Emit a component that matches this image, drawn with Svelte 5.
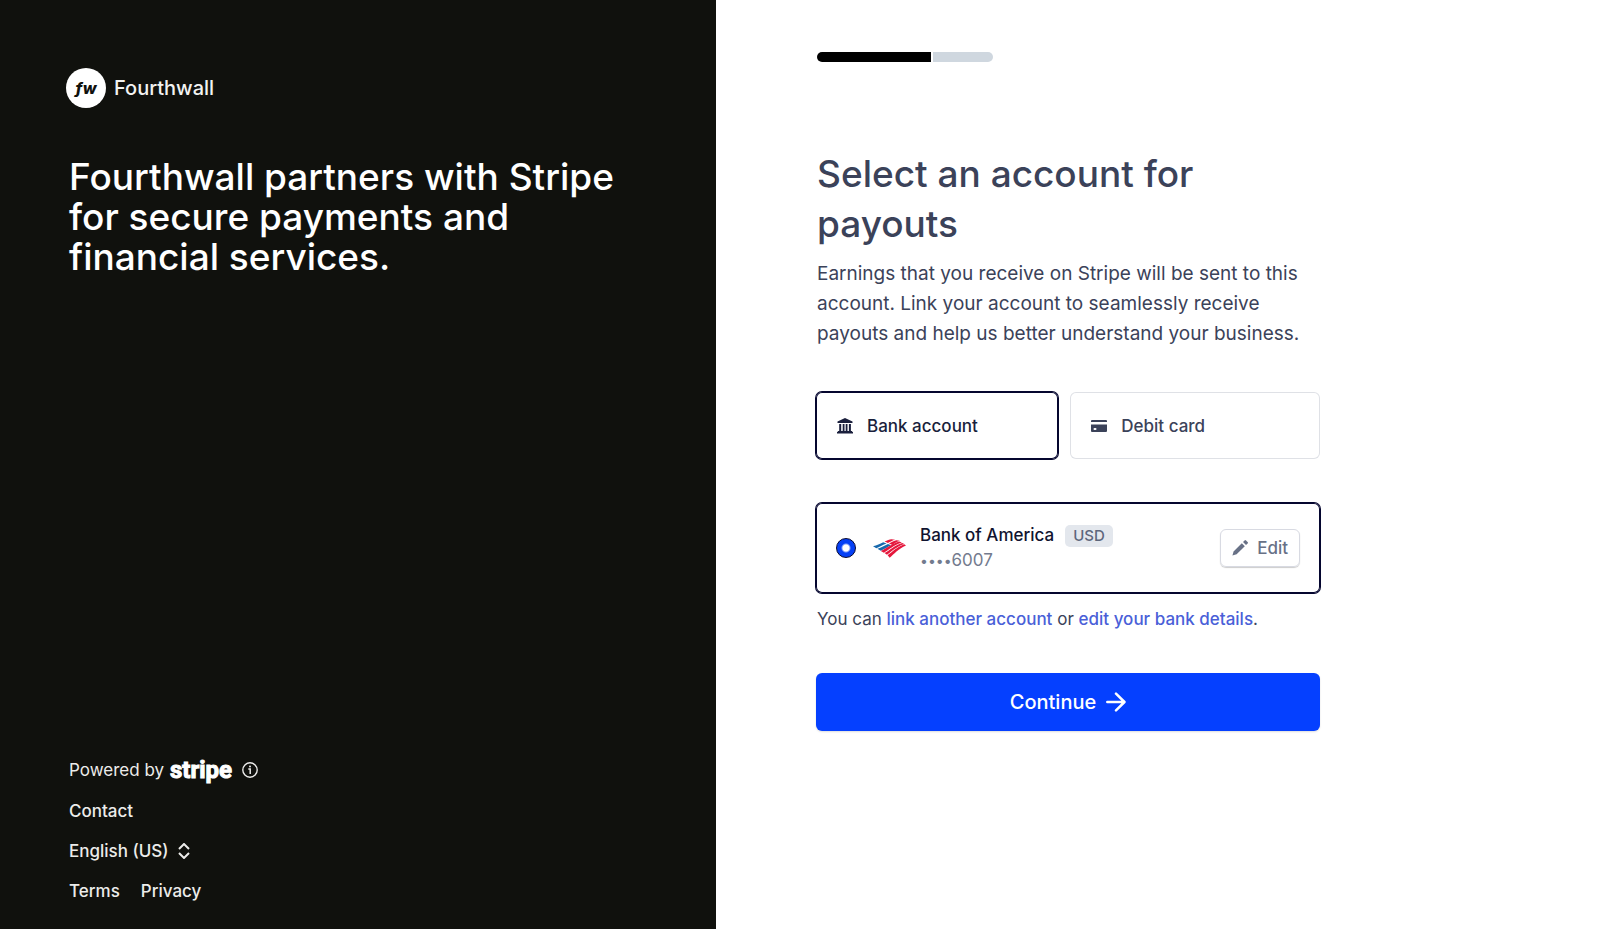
<script>
  let method = "bank";
  let account = "boa";
  const progress = 65;
</script>

<div class="page">
  <aside class="intro">
    <div class="brand">
      <span class="badge">fw</span>
      <span class="brand-name">Fourthwall</span>
    </div>
    <h2>
      Fourthwall partners with Stripe<br />for secure payments and<br />financial services.
    </h2>

    <footer>
      <div class="powered">
        <span>Powered by</span>
        <span class="stripe">stripe</span>
        <button class="info" aria-label="About Stripe">
          <svg width="16" height="16" viewBox="0 0 16 16" fill="none">
            <circle cx="8" cy="8" r="7.200" stroke="currentColor" stroke-width="1.400" />
            <path d="M6.300 7.100h1.900v4.900" stroke="currentColor" stroke-width="1.500" />
            <circle cx="8" cy="4.600" r="1" fill="currentColor" />
          </svg>
        </button>
      </div>
      <a href="#contact">Contact</a>
      <button class="language">
        English (US)
        <svg width="12" height="16" viewBox="0 0 12 16" fill="none" stroke="currentColor" stroke-width="2">
          <path d="M1 6l5-5 5 5M1 10l5 5 5-5" />
        </svg>
      </button>
      <nav>
        <a href="#terms">Terms</a>
        <a href="#privacy">Privacy</a>
      </nav>
    </footer>
  </aside>

  <main>
    <div class="progress">
      <div class="done" style="width: {progress}%"></div>
      <div class="rest"></div>
    </div>

    <h1>Select an account for payouts</h1>
    <p class="lead">
      Earnings that you receive on Stripe will be sent to this account. Link your account to
      seamlessly receive payouts and help us better understand your business.
    </p>

    <div class="methods">
      <button class="method" class:selected={method === "bank"} on:click={() => (method = "bank")}>
        <svg width="16" height="16" viewBox="0 0 16 16" fill="currentColor">
          <path d="M8 0l7.500 3.400V5H.5V3.400zM2.200 6h2v7h-2zM5.700 6h1.800v7H5.700zM8.700 6h1.800v7H8.700zM11.900 6h2v7h-2zM.8 13h14.400v1H16v1.500H0V14h.8z" />
        </svg>
        Bank account
      </button>
      <button class="method" class:selected={method === "card"} on:click={() => (method = "card")}>
        <svg width="16" height="16" viewBox="0 0 16 16" fill="currentColor">
          <path d="M1 2h14a1 1 0 0 1 1 1v1H0V3a1 1 0 0 1 1-1z" />
          <path fill-rule="evenodd" d="M0 6.500h16V13a1 1 0 0 1-1 1H1a1 1 0 0 1-1-1zM3.500 10a1 1 0 0 0 0 2h1a1 1 0 0 0 0-2z" />
        </svg>
        Debit card
      </button>
    </div>

    <div class="account">
      <input type="radio" id="boa" name="account" value="boa" bind:group={account} />
      <label for="boa">
        <svg width="33" height="19" viewBox="0 0 97 55">
          <g fill="#1769ad">
            <path d="M0 21C12 18 20 14 30 9l10 4C29 17 21 22 10 27z" />
            <path d="M13 28C25 24 34 19 44 14l9 4C43 23 35 29 23 34z" />
          </g>
          <g fill="#e5173c">
            <path d="M34 7C42 3 48 0 54 0l11 2C57 4 51 8 44 11z" />
            <path d="M47 13C55 8 62 4 69 3l10 2C71 7 64 12 57 17z" />
            <path d="M23 35C39 28 54 14 77 7l8 3C61 18 47 31 32 40z" />
            <path d="M34 41C50 32 62 19 86 11l6 3C69 22 55 35 41 46z" />
            <path d="M43 47C58 37 68 24 92 15l5 4C75 28 63 43 49 55z" />
          </g>
        </svg>
        <span class="details">
          <span class="bank">Bank of America <span class="currency">USD</span></span>
          <span class="number"><span class="dots">••••</span>6007</span>
        </span>
      </label>
      <button class="edit">
        <svg width="16" height="16" viewBox="0 0 16 16" fill="currentColor">
          <path d="M9.800 3.200l3 3L4.600 14.300.4 15.600 1.600 11.400z" />
          <path d="M11 2L12.600.4a1 1 0 0 1 1.400 0l1.600 1.600a1 1 0 0 1 0 1.400L14 5z" />
        </svg>
        Edit
      </button>
    </div>
    <p class="hint">
      You can <a href="#link">link another account</a> or <a href="#edit">edit your bank details</a>.
    </p>

    <button class="continue">
      Continue
      <svg width="20" height="20" viewBox="0 0 20 20" fill="none" stroke="currentColor" stroke-width="2.500">
        <path d="M1.300 10h17M10 1.700l8.500 8.300-8.500 8.300" stroke-linecap="round" stroke-linejoin="round" />
      </svg>
    </button>
  </main>
</div>

<style>
  :global(body) {
    margin: 0;
  }

  .page {
    display: flex;
    min-height: 100vh;
    font-family: Inter, "Liberation Sans", sans-serif;
    color: #3b4259;
    background: #fff;
  }

  button {
    font: inherit;
    color: inherit;
    background: none;
    border: 0;
    padding: 0;
    cursor: pointer;
  }

  a {
    color: inherit;
    text-decoration: none;
  }

  svg {
    flex: none;
    display: block;
  }

  .intro {
    box-sizing: border-box;
    width: 716px;
    flex: none;
    padding: 68px 66px 26px;
    display: flex;
    flex-direction: column;
    background: #10110d;
    color: #fff;
  }

  .brand {
    display: flex;
    align-items: center;
    gap: 8px;
    color: #f3f3f1;
    font-size: 20px;
    font-weight: 500;
  }

  .badge {
    width: 40px;
    height: 40px;
    border-radius: 50%;
    background: #fff;
    color: #10110d;
    display: flex;
    align-items: center;
    justify-content: center;
    font-size: 16px;
    font-weight: 800;
    font-style: italic;
  }

  h2 {
    margin: 49px 0 0 3px;
    font-size: 37px;
    line-height: 40px;
    font-weight: 500;
  }

  footer {
    margin: auto 0 0 3px;
    display: flex;
    flex-direction: column;
    align-items: flex-start;
    gap: 16px;
    font-size: 17px;
    line-height: 24px;
    font-weight: 500;
    color: #ececea;
  }

  .powered {
    display: flex;
    align-items: center;
    margin-bottom: 1px;
    font-weight: 400;
  }

  .stripe {
    margin: 0 10px 0 6px;
    font-family: Roboto, "Liberation Sans", sans-serif;
    font-size: 24px;
    font-weight: 700;
    color: #fff;
    -webkit-text-stroke: 1px #fff;
  }

  .language {
    display: flex;
    align-items: center;
    gap: 9px;
  }

  nav {
    display: flex;
    gap: 21px;
  }

  main {
    box-sizing: border-box;
    flex: 1;
    max-width: 604px;
    padding: 52px 0 52px 100px;
  }

  .progress {
    display: flex;
    gap: 2px;
    width: 176px;
    height: 10px;
    margin-left: 1px;
    border-radius: 5px;
    overflow: hidden;
  }

  .done {
    background: #000;
  }

  .rest {
    flex: 1;
    background: #cfd7df;
  }

  h1 {
    margin: 87px 0 0 1px;
    font-size: 37px;
    line-height: 50px;
    font-weight: 500;
  }

  .lead {
    margin: 10px 0 0 1px;
    font-size: 19px;
    line-height: 30px;
  }

  .methods {
    display: grid;
    grid-template-columns: 33fr 34fr;
    gap: 12px;
    margin-top: 43px;
  }

  .method {
    height: 67px;
    display: flex;
    align-items: center;
    gap: 14px;
    padding: 0 21px;
    border-radius: 6px;
    box-shadow: inset 0 0 0 1px #dfe1e6;
    font-size: 17px;
    font-weight: 500;
  }

  .method.selected {
    box-shadow: 0 0 0 1px #05062f, inset 0 0 0 1px #05062f;
    color: #1a1f3c;
  }

  .account {
    display: flex;
    align-items: center;
    height: 90px;
    margin-top: 44px;
    padding: 0 20px;
    border-radius: 6px;
    box-shadow: 0 0 0 1px #05062f, inset 0 0 0 1px #05062f;
  }

  .account input {
    appearance: none;
    flex: none;
    box-sizing: border-box;
    width: 20px;
    height: 20px;
    margin: 0 17px 0 0;
    border: 1px solid #05062f;
    border-radius: 50%;
  }

  .account input:checked {
    background: radial-gradient(circle, #fff 3px, #0540f5 5px);
  }

  .account label {
    flex: 1;
    display: flex;
    align-items: center;
    gap: 14px;
  }

  .details {
    display: flex;
    flex-direction: column;
    line-height: 25px;
    font-size: 17px;
  }

  .bank {
    display: flex;
    align-items: center;
    gap: 11px;
    font-weight: 500;
    color: #10132f;
  }

  .currency {
    padding: 0 8px;
    border-radius: 5px;
    background: #e3e7ed;
    color: #5d667c;
    font-size: 15px;
    line-height: 22px;
  }

  .number {
    color: #737b8e;
  }

  .dots {
    font-size: 14px;
  }

  .edit {
    display: flex;
    align-items: center;
    gap: 9px;
    height: 38px;
    padding: 0 11px;
    border: 1px solid #d8dae2;
    border-radius: 6px;
    box-shadow: 0 1px 1px #0003;
    color: #687186;
    font-size: 17px;
    font-weight: 500;
  }

  .hint {
    margin: 14px 0 0 1px;
    font-size: 17px;
    line-height: 24px;
  }

  .hint a {
    color: #4a5fd8;
    font-weight: 500;
  }

  .continue {
    display: flex;
    align-items: center;
    justify-content: center;
    gap: 10px;
    width: 100%;
    height: 58px;
    margin-top: 42px;
    border-radius: 6px;
    background: #0540ff;
    box-shadow: 0 1px 2px #0002;
    color: #fff;
    font-size: 20px;
    font-weight: 500;
  }
</style>
